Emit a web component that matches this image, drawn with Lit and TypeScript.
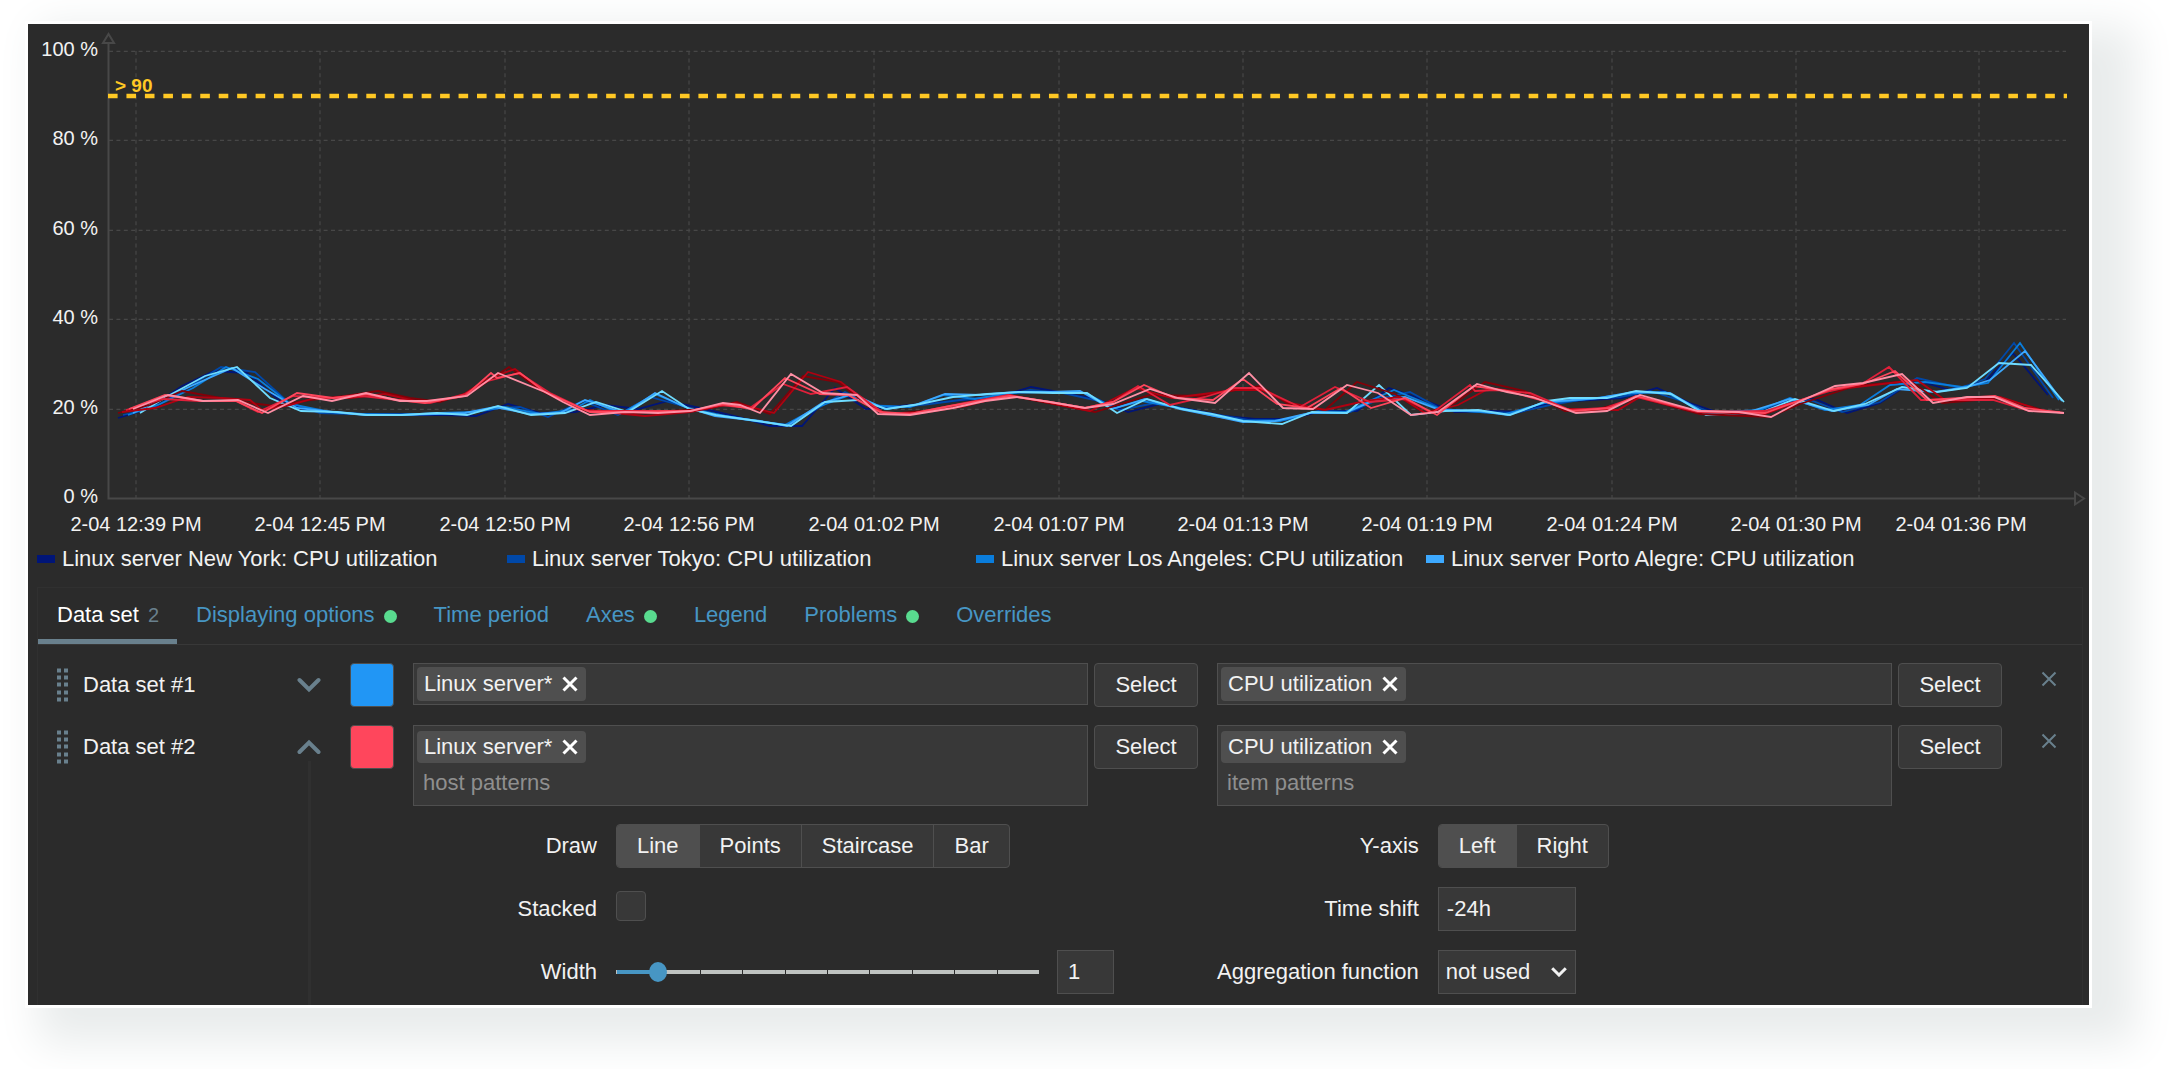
import { LitElement, html, svg, css, nothing } from "lit";
import { customElement, property } from "lit/decorators.js";

interface Series {
  color: string;
  points: string;
}

interface DataSet {
  id: number;
  color: string;
  open: boolean;
}

const X_TICKS: [number, string][] = [
  [136, "2-04 12:39 PM"],
  [320, "2-04 12:45 PM"],
  [505, "2-04 12:50 PM"],
  [689, "2-04 12:56 PM"],
  [874, "2-04 01:02 PM"],
  [1059, "2-04 01:07 PM"],
  [1243, "2-04 01:13 PM"],
  [1427, "2-04 01:19 PM"],
  [1612, "2-04 01:24 PM"],
  [1796, "2-04 01:30 PM"],
  [1979, "2-04 01:36 PM"],
];

const X_LABEL_SHIFT: Record<number, number> = { 1979: 1961 };

const Y_TICKS: [number, string][] = [
  [51, "100 %"],
  [140, "80 %"],
  [230, "60 %"],
  [319, "40 %"],
  [409, "20 %"],
  [498, "0 %"],
];

const SERIES: Series[] = [
  {
    color: "#001578",
    points:
      "118,418 148,409 182,386 214,371 247,373 281,402 310,411 345,413 378,415 410,415 445,415 476,416 508,404 541,413 575,412 605,405 638,409 668,401 700,408 735,416 770,426 802,426 835,388 866,409 900,406 933,403 963,400 997,397 1031,387 1064,393 1097,399 1128,412 1160,404 1193,410 1224,416 1255,419 1290,419 1322,411 1357,411 1389,388 1424,400 1455,412 1490,411 1520,412 1553,402 1590,400 1622,398 1657,388 1690,403 1720,413 1752,413 1785,402 1815,399 1847,413 1880,403 1915,380 1950,390 1985,382 2013,353 2048,395",
  },
  {
    color: "#0048a8",
    points:
      "123,415 155,407 187,388 221,367 255,372 288,402 320,413 355,414 390,414 425,414 458,414 488,409 520,407 548,417 583,401 618,415 650,397 690,408 720,415 760,422 790,425 820,407 845,392 870,405 900,407 930,404 960,400 1000,396 1030,390 1063,393 1095,400 1120,410 1155,403 1185,409 1218,415 1248,420 1285,420 1318,411 1350,412 1382,398 1410,392 1443,410 1480,412 1515,413 1550,405 1585,399 1620,397 1650,391 1685,402 1715,414 1750,413 1783,402 1810,400 1842,412 1880,402 1917,378 1960,388 1985,379 2014,343 2053,398",
  },
  {
    color: "#0a7ddc",
    points:
      "128,415 160,404 193,388 226,367 258,379 290,404 330,412 362,414 400,415 440,413 475,412 505,407 540,414 572,410 590,400 620,414 655,394 690,409 725,416 765,422 785,425 818,407 850,395 880,406 910,407 944,395 975,399 1010,393 1050,392 1085,393 1115,408 1142,401 1180,408 1215,416 1245,421 1280,421 1310,413 1345,412 1394,390 1440,409 1480,412 1505,414 1545,403 1590,399 1633,393 1665,392 1705,413 1760,410 1790,398 1825,410 1860,405 1890,385 1925,382 1962,387 1988,383 2020,343 2059,400",
  },
  {
    color: "#3da9ff",
    points:
      "133,413 165,398 200,382 232,368 265,389 297,408 333,412 365,415 400,415 435,414 465,413 495,407 530,414 560,413 585,400 625,413 655,393 685,407 715,416 760,421 787,426 822,403 853,394 885,409 915,405 945,394 980,395 1015,392 1050,392 1080,391 1112,409 1145,399 1180,409 1215,416 1243,422 1275,421 1310,413 1345,413 1375,400 1405,397 1440,410 1480,411 1508,415 1545,402 1600,398 1633,392 1670,393 1705,413 1745,413 1790,399 1832,411 1868,405 1897,389 1935,392 1967,387 1990,380 2025,351 2062,401",
  },
  {
    color: "#6fdcff",
    points:
      "140,413 168,396 205,376 237,367 270,398 301,411 337,412 367,415 402,415 437,413 467,415 498,406 531,415 565,413 596,402 628,412 662,391 689,409 716,415 757,421 791,426 825,402 858,400 887,409 920,404 953,397 987,394 1019,392 1053,393 1087,393 1117,413 1147,399 1182,409 1212,414 1243,421 1282,424 1312,412 1347,413 1379,385 1411,415 1445,411 1478,410 1510,415 1547,401 1570,398 1607,398 1636,391 1671,394 1706,415 1741,413 1762,412 1795,399 1834,411 1865,404 1902,387 1937,392 1967,388 1999,363 2031,365 2064,402",
  },
  {
    color: "#820008",
    points:
      "118,413 150,405 182,391 215,397 250,403 275,406 310,400 345,396 378,391 410,398 440,402 475,390 509,367 540,390 580,410 635,413 705,409 737,402 770,414 803,376 838,382 870,407 890,414 945,409 1000,398 1017,397 1095,412 1150,395 1200,396 1260,386 1290,405 1325,410 1357,382 1395,394 1425,413 1455,403 1485,382 1525,391 1565,411 1590,411 1640,398 1700,414 1770,417 1800,404 1855,386 1910,381 1942,403 2000,398 2050,412",
  },
  {
    color: "#b00010",
    points:
      "122,412 155,408 188,397 222,398 250,400 262,410 290,405 315,398 350,398 385,394 420,402 460,397 485,380 515,369 545,392 585,410 645,416 690,412 735,403 774,413 808,372 841,382 870,405 885,414 915,414 965,406 1010,395 1090,411 1135,388 1172,398 1235,390 1262,390 1290,403 1325,410 1365,401 1400,397 1425,413 1458,405 1490,388 1527,393 1565,409 1618,410 1640,397 1700,412 1765,414 1830,390 1917,380 1945,400 2000,397 2040,410",
  },
  {
    color: "#e0203a",
    points:
      "126,410 163,399 200,401 236,401 258,412 293,396 330,398 362,396 398,400 430,403 465,394 488,381 519,373 550,393 588,411 625,411 690,411 720,405 750,408 783,384 811,394 847,387 885,414 915,413 965,403 1008,395 1085,408 1113,402 1138,386 1170,405 1205,397 1235,388 1260,388 1300,407 1335,387 1370,402 1405,399 1432,413 1470,385 1475,391 1495,390 1530,393 1570,410 1605,408 1636,397 1698,412 1765,411 1830,391 1862,384 1889,367 1921,400 1993,400 2030,411 2060,412",
  },
  {
    color: "#ff465c",
    points:
      "129,409 165,395 203,401 236,401 262,413 297,393 333,398 366,394 398,400 425,403 465,396 491,373 497,378 520,373 545,392 590,412 625,412 690,411 723,404 752,409 785,378 820,394 848,395 880,412 910,414 950,406 1010,396 1050,402 1085,408 1113,402 1144,385 1175,398 1213,400 1243,379 1277,404 1307,408 1341,388 1371,408 1405,398 1437,415 1474,386 1507,391 1540,400 1573,411 1610,408 1636,396 1698,411 1765,413 1832,389 1863,384 1895,371 1927,400 1995,396 2025,408 2064,413",
  },
  {
    color: "#ff8fa5",
    points:
      "133,409 168,395 203,401 238,400 268,413 303,396 332,401 366,393 400,401 427,401 467,396 498,373 545,392 563,402 590,415 625,412 658,413 690,411 723,403 740,405 760,413 791,374 823,393 857,395 878,414 910,415 953,408 985,401 1017,397 1050,402 1085,408 1113,404 1150,389 1178,398 1215,403 1249,373 1283,408 1313,409 1347,385 1378,393 1411,415 1438,412 1477,384 1507,392 1533,397 1576,413 1607,411 1640,395 1698,411 1739,412 1771,417 1801,401 1835,386 1863,383 1902,374 1933,403 1967,397 1994,397 2029,411 2064,413",
  },
];

const LEGEND: [string, string][] = [
  ["#001578", "Linux server New York: CPU utilization"],
  ["#0048a8", "Linux server Tokyo: CPU utilization"],
  ["#0a7ddc", "Linux server Los Angeles: CPU utilization"],
  ["#3da9ff", "Linux server Porto Alegre: CPU utilization"],
];

const TABS: { label: string; count?: number; changed?: boolean }[] = [
  { label: "Data set", count: 2 },
  { label: "Displaying options", changed: true },
  { label: "Time period" },
  { label: "Axes", changed: true },
  { label: "Legend" },
  { label: "Problems", changed: true },
  { label: "Overrides" },
];

const DATA_SETS: DataSet[] = [
  { id: 1, color: "#2196f5", open: false },
  { id: 2, color: "#ff465c", open: true },
];

const crossIcon = (width: number) => html`
  <svg width="16" height="16" viewBox="0 0 16 16" fill="none" stroke="currentColor" stroke-width=${width} aria-hidden="true">
    <path d="M1.5 1.5 14.5 14.5M14.5 1.5 1.5 14.5" />
  </svg>
`;

@customElement("cpu-chart")
export class CpuChart extends LitElement {
  static styles = css`
    :host {
      display: block;
      color: #f2f2f2;
      font: 22px/37px "Liberation Sans", Arial, sans-serif;
    }
    .plot {
      display: block;
      width: 100%;
      height: auto;
    }
    .grid {
      stroke: #474747;
      stroke-width: 1.2;
      stroke-dasharray: 4 3.4;
    }
    .axis {
      fill: none;
      stroke: #484848;
      stroke-width: 2;
    }
    .tick {
      fill: #f2f2f2;
      font-size: 20px;
    }
    .tick-y {
      text-anchor: end;
    }
    .tick-x {
      text-anchor: middle;
    }
    .line {
      fill: none;
      stroke-width: 1.8;
    }
    .trigger {
      stroke: #ffc824;
      stroke-width: 4.4;
      stroke-dasharray: 9.6 8.85;
    }
    .trigger-label {
      fill: #ffc824;
      font-size: 19px;
      font-weight: 700;
    }
    .legend {
      display: grid;
      grid-template-columns: 470fr 469fr 450fr 663fr;
      margin: 0 0 10px 9px;
      padding: 0;
      list-style: none;
      white-space: nowrap;
    }
    .entry {
      display: flex;
      align-items: center;
      gap: 7px;
    }
    .swatch {
      width: 18px;
      height: 8px;
    }
  `;

  render() {
    return html`
      <svg class="plot" viewBox="28 24 2061 516" role="img" aria-label="CPU utilization">
        ${Y_TICKS.map(
          ([y, label]) => svg`
            ${y < 498 ? svg`<line class="grid" x1="109" x2="2066" y1=${y + 0.4} y2=${y + 0.4} />` : nothing}
            <text class="tick tick-y" x="98" y=${y + 5}>${label}</text>`
        )}
        ${X_TICKS.map(
          ([x, label]) => svg`
            <line class="grid" x1=${x} x2=${x} y1="51" y2="498" />
            <text class="tick tick-x" x=${X_LABEL_SHIFT[x] ?? x} y="531">${label}</text>`
        )}
        <path class="axis" d="M108.5 43V498.5H2075M103 43h11l-5.5-9zM2075 492.5v12l9-6z" />
        ${SERIES.map((s) => svg`<polyline class="line" stroke=${s.color} points=${s.points} />`)}
        <line class="trigger" x1="108" x2="2067" y1="96" y2="96" />
        <text class="trigger-label" x="115" y="92">&gt; 90</text>
      </svg>
      <ul class="legend">
        ${LEGEND.map(
          ([color, label]) => html`
            <li class="entry"><span class="swatch" style="background:${color}"></span>${label}</li>
          `
        )}
      </ul>
    `;
  }
}

@customElement("data-set-row")
export class DataSetRow extends LitElement {
  @property({ attribute: false }) set!: DataSet;

  static styles = css`
    :host {
      display: grid;
      grid-template-columns: 274px 44px minmax(0, 1fr) minmax(0, 1fr) 36px;
      column-gap: 19px;
      row-gap: 18px;
      padding: 0 25px 0 19px;
    }
    * {
      box-sizing: border-box;
    }
    button,
    input,
    select {
      margin: 0;
      padding: 0;
      border: 0;
      background: none;
      color: inherit;
      font: inherit;
    }
    svg {
      display: block;
    }
    .side {
      grid-row: 1 / span 2;
      display: flex;
      flex-direction: column;
    }
    .closed {
      grid-row: 1;
    }
    .head {
      display: flex;
      align-items: center;
      height: 44px;
      padding-right: 10px;
    }
    .name {
      flex: 1;
      padding-left: 14px;
    }
    .muted {
      color: #69808d;
    }
    .guide {
      flex: 1;
      align-self: flex-end;
      width: 3px;
      margin: -8px 20px 0 0;
      background: #303030;
    }
    .color {
      height: 44px;
      border: 1px solid #4f4f4f;
      border-radius: 4px;
    }
    .picker {
      display: flex;
      align-items: flex-start;
      gap: 6px;
    }
    .multi {
      flex: 1;
      display: flex;
      flex-wrap: wrap;
      min-width: 0;
      padding: 3px;
      background: #383838;
      border: 1px solid #4f4f4f;
    }
    .multi.tall {
      padding-top: 5px;
    }
    .chip {
      display: flex;
      align-items: center;
      gap: 10px;
      padding: 0 8px 0 7px;
      line-height: 34px;
      border-radius: 4px;
      background: #4f4f4f;
      white-space: nowrap;
    }
    .tall .chip {
      line-height: 32px;
      height: 32px;
    }
    .chip-remove {
      color: #ffffff;
    }
    .entry {
      flex: 1;
      min-width: 0;
      height: 34px;
      padding: 0 6px;
      outline: none;
    }
    .tall .entry {
      flex: 1 0 100%;
      height: 39px;
    }
    .entry::placeholder {
      color: #8f8f8f;
      opacity: 1;
    }
    .button {
      width: 104px;
      height: 44px;
      border: 1px solid #4f4f4f;
      border-radius: 4px;
      background: #383838;
    }
    .remove {
      align-self: start;
      justify-self: end;
      height: 32px;
    }
    .options {
      display: grid;
      grid-template-columns: 184px minmax(0, 1fr);
      grid-auto-rows: 44px;
      align-items: center;
      gap: 19px;
      padding-bottom: 11px;
    }
    .left {
      grid-column: 3;
    }
    .right {
      grid-column: 4;
      grid-template-columns: auto minmax(0, 1fr);
    }
    .label {
      text-align: right;
      white-space: nowrap;
    }
    .segments {
      display: flex;
      justify-self: start;
      height: 44px;
      border: 1px solid #4f4f4f;
      border-radius: 4px;
      background: #383838;
      overflow: hidden;
    }
    .segment {
      padding: 0 20px;
      line-height: 42px;
    }
    .segment + .segment {
      border-left: 1px solid #4f4f4f;
    }
    .radio {
      position: absolute;
      opacity: 0;
    }
    .segment:has(.radio:checked) {
      background: #4f4f4f;
    }
    .check {
      appearance: none;
      align-self: start;
      width: 30px;
      height: 30px;
      margin-top: 4px;
      border: 1px solid #4f4f4f;
      border-radius: 4px;
      background: #383838;
    }
    .width {
      display: flex;
      align-items: center;
      gap: 8px;
    }
    .slider {
      appearance: none;
      width: 442px;
      height: 20px;
      margin-left: -9px;
      background:
        linear-gradient(#4796c4, #4796c4) 10px center / 42px 4px no-repeat,
        repeating-linear-gradient(to right, #bfc3c1 0, #bfc3c1 calc(10% - 1px), #2b2b2b calc(10% - 1px), #2b2b2b 10%)
          center / calc(100% - 18px) 4px no-repeat;
    }
    .slider::-webkit-slider-thumb {
      appearance: none;
      width: 18px;
      height: 20px;
      border-radius: 50%;
      background: #4796c4;
    }
    .box {
      height: 44px;
      padding: 0 8px;
      border: 1px solid #4f4f4f;
      background: #383838;
    }
    .number {
      width: 57px;
      padding: 0 10px;
    }
    .shift {
      width: 138px;
    }
    .dropdown {
      display: grid;
      width: 138px;
      align-items: center;
    }
    .dropdown > * {
      grid-area: 1 / 1;
    }
    .dropdown svg {
      justify-self: end;
      margin-right: 9px;
      pointer-events: none;
    }
    .list {
      appearance: none;
      width: 100%;
      padding: 0 7px;
      border: 1px solid #4f4f4f;
      border-radius: 0;
    }
  `;

  private picker(kind: string, chip: string) {
    const open = this.set.open;
    return html`
      <div class="picker">
        <div class="multi ${open ? "tall" : ""}">
          <span class="chip">
            ${chip}
            <button class="chip-remove" aria-label="Remove ${chip}">${crossIcon(3)}</button>
          </span>
          <input class="entry" aria-label="${kind} patterns" placeholder=${open ? `${kind} patterns` : ""} />
        </div>
        <button class="button">Select</button>
      </div>
    `;
  }

  private segments(name: string, choices: string[]) {
    return html`
      <div class="segments" role="radiogroup" aria-labelledby=${name}>
        ${choices.map(
          (choice, i) => html`
            <label class="segment">
              <input class="radio" type="radio" name=${name} ?checked=${i === 0} />${choice}
            </label>
          `
        )}
      </div>
    `;
  }

  private options() {
    return html`
      <div class="options left">
        <span class="label" id="draw">Draw</span>
        ${this.segments("draw", ["Line", "Points", "Staircase", "Bar"])}
        <label class="label" for="stacked">Stacked</label>
        <input class="check" id="stacked" type="checkbox" />
        <label class="label" for="width">Width</label>
        <div class="width">
          <input class="slider" id="width" type="range" min="0" max="10" value="1" />
          <input class="box number" aria-label="Width value" value="1" />
        </div>
      </div>
      <div class="options right">
        <span class="label" id="axis">Y-axis</span>
        ${this.segments("axis", ["Left", "Right"])}
        <label class="label" for="shift">Time shift</label>
        <input class="box shift" id="shift" value="-24h" />
        <label class="label" for="aggregation">Aggregation function</label>
        <div class="dropdown">
          <select class="box list" id="aggregation">
            <option>not used</option>
          </select>
          <svg width="16" height="10" viewBox="0 0 16 10" fill="none" stroke="#f2f2f2" stroke-width="3" aria-hidden="true">
            <path d="M1.2 1.2 8 8 14.8 1.2" />
          </svg>
        </div>
      </div>
    `;
  }

  render() {
    const { id, color, open } = this.set;
    return html`
      <div class="side ${open ? "" : "closed"}">
        <div class="head">
          <svg class="muted" width="12" height="34" viewBox="0 0 12 34" fill="currentColor" aria-hidden="true">
            ${[0, 7, 14, 22, 29].map(
              (y) => svg`<rect y=${y + 0.5} width="4" height="4" /><rect x="7" y=${y + 0.5} width="4" height="4" />`
            )}
          </svg>
          <span class="name">Data set #${id}</span>
          <button class="muted" aria-label="Toggle data set ${id}" aria-expanded=${open}>
            <svg width="24" height="16" viewBox="0 0 24 16" fill="none" stroke="currentColor" stroke-width="4" stroke-linecap="round">
              <path d=${open ? "M2.5 13 12 3.5 21.5 13" : "M2.5 3 12 12.5 21.5 3"} />
            </svg>
          </button>
        </div>
        ${open ? html`<div class="guide"></div>` : nothing}
      </div>
      <button class="color" aria-label="Color" style="background:${color}"></button>
      ${this.picker("host", "Linux server*")} ${this.picker("item", "CPU utilization")}
      <button class="remove muted" aria-label="Remove data set ${id}">${crossIcon(2)}</button>
      ${open ? this.options() : nothing}
    `;
  }
}

@customElement("app-root")
export class AppRoot extends LitElement {
  static styles = css`
    :host {
      display: flow-root;
      background: #ffffff;
      color: #f2f2f2;
      font: 22px/26px "Liberation Sans", Arial, sans-serif;
    }
    .panel {
      margin: 24px 81px 64px 28px;
      background: #2b2b2b;
      box-shadow:
        0 0 0 3px #ffffff,
        28px 20px 40px 18px #e9ecec;
    }
    .form {
      margin: 0 6px 0 9px;
      border: 1px solid #303030;
      border-bottom: 0;
    }
    .tabs {
      display: flex;
      border-bottom: 1px solid #383838;
    }
    .tab {
      display: flex;
      align-items: center;
      gap: 9px;
      height: 56px;
      padding: 2px 18px 0 19px;
      border: 0;
      border-bottom: 5px solid transparent;
      background: none;
      color: #4796c4;
      font: inherit;
    }
    .active {
      border-bottom-color: #69808d;
      color: #ffffff;
    }
    .count {
      color: #69808d;
      font-size: 20px;
    }
    .dot {
      width: 13px;
      height: 13px;
      margin-top: 4px;
      border-radius: 50%;
      background: #59db8f;
    }
    .sets {
      display: flex;
      flex-direction: column;
      gap: 18px;
      padding-top: 18px;
    }
  `;

  render() {
    return html`
      <main class="panel">
        <cpu-chart></cpu-chart>
        <section class="form">
          <div class="tabs" role="tablist">
            ${TABS.map(
              (tab, i) => html`
                <button class="tab ${i === 0 ? "active" : ""}" role="tab" aria-selected=${i === 0}>
                  ${tab.label}
                  ${tab.count ? html`<span class="count">${tab.count}</span>` : nothing}
                  ${tab.changed ? html`<span class="dot"></span>` : nothing}
                </button>
              `
            )}
          </div>
          <div class="sets">
            ${DATA_SETS.map((set) => html`<data-set-row .set=${set}></data-set-row>`)}
          </div>
        </section>
      </main>
    `;
  }
}
